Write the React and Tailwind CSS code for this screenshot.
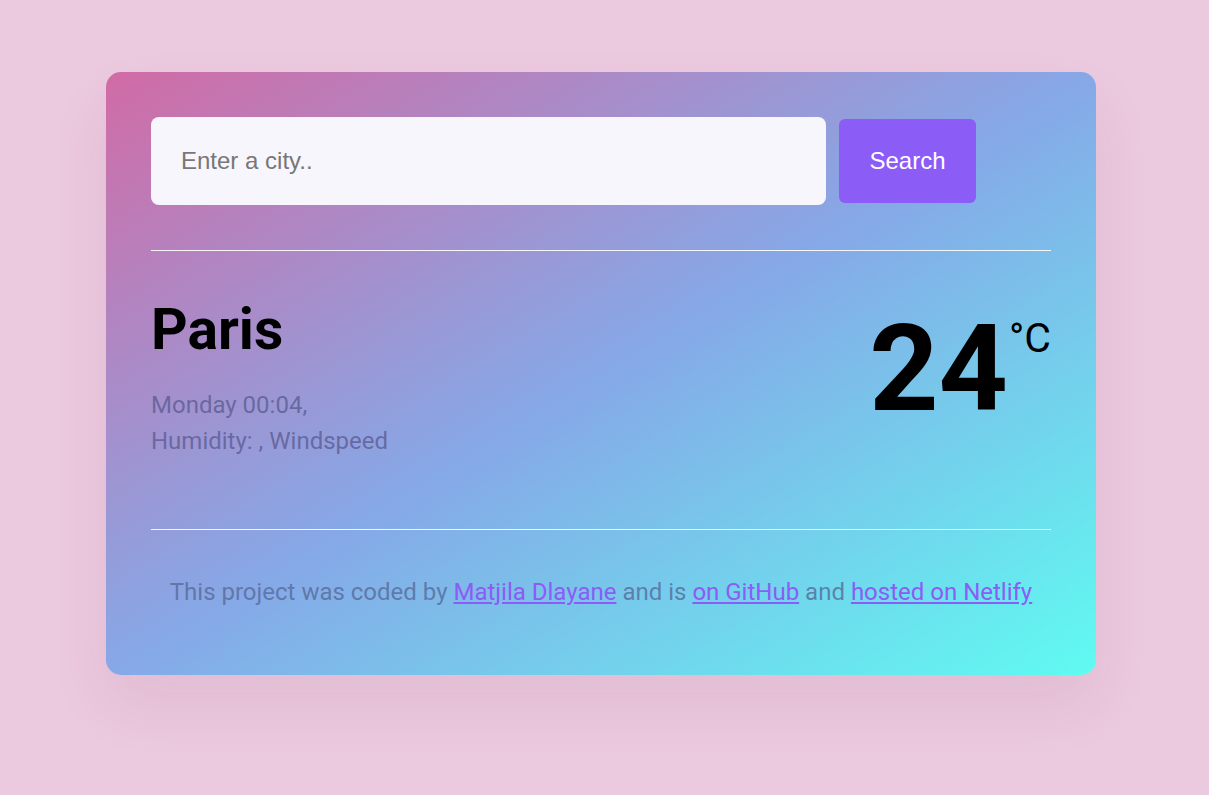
export default function App() {
  return (
    <div className="min-h-screen w-full bg-[#ebc9de] pt-[72px] pb-[120px] font-['Roboto',sans-serif]">
      <div className="ml-[106px] w-[990px] rounded-[15px] bg-[linear-gradient(to_bottom_right,#d16ba5,#86a8e7,#5ffbf1)] px-[45px] pt-[45px] pb-[68px] shadow-[0_30px_60px_rgba(120,40,90,0.08)]">
        {/* search */}
        <form className="flex items-center" onSubmit={e => e.preventDefault()}>
          <input
            type="search"
            placeholder="Enter a city.."
            className="h-[88px] w-[675px] rounded-[8px] bg-[#f8f6fd] px-[30px] font-['Liberation_Sans',Arial,sans-serif] text-[24px] text-[#333] outline-none placeholder:text-[#777]"
          />
          <button
            type="submit"
            className="ml-[13px] h-[84px] w-[137px] rounded-[6px] bg-[#8b5cf6] font-['Liberation_Sans',Arial,sans-serif] text-[24px] text-white"
          >
            Search
          </button>
        </form>

        <hr className="mt-[45px] border-0 border-t border-white/90" />

        {/* current weather */}
        <div className="flex h-[278px] justify-between pt-[44px]">
          <div>
            <h1 className="text-[57px] font-bold leading-[70px] text-black">Paris</h1>
            <div className="mt-[22px] text-[24px] leading-[36px] text-[#5c5c92]/80">
              <div>Monday 00:04,</div>
              <div>Humidity: , Windspeed</div>
            </div>
          </div>
          <div className="flex items-start pt-[16px]">
            <span className="text-[121px] font-bold leading-[116px] text-black">24</span>
            <span className="ml-[1px] mt-[8px] text-[41px] leading-[38px] text-black">°C</span>
          </div>
        </div>

        <hr className="border-0 border-t border-white/90" />

        <p className="pt-[47px] text-center text-[24px] leading-[30px] text-[#566a9a]/80">
          This project was coded by{' '}
          <a href="#" className="text-[#8b5cf6] underline">Matjila Dlayane</a> and is{' '}
          <a href="#" className="text-[#8b5cf6] underline">on GitHub</a> and{' '}
          <a href="#" className="text-[#8b5cf6] underline">hosted on Netlify</a>
        </p>
      </div>
    </div>
  );
}
